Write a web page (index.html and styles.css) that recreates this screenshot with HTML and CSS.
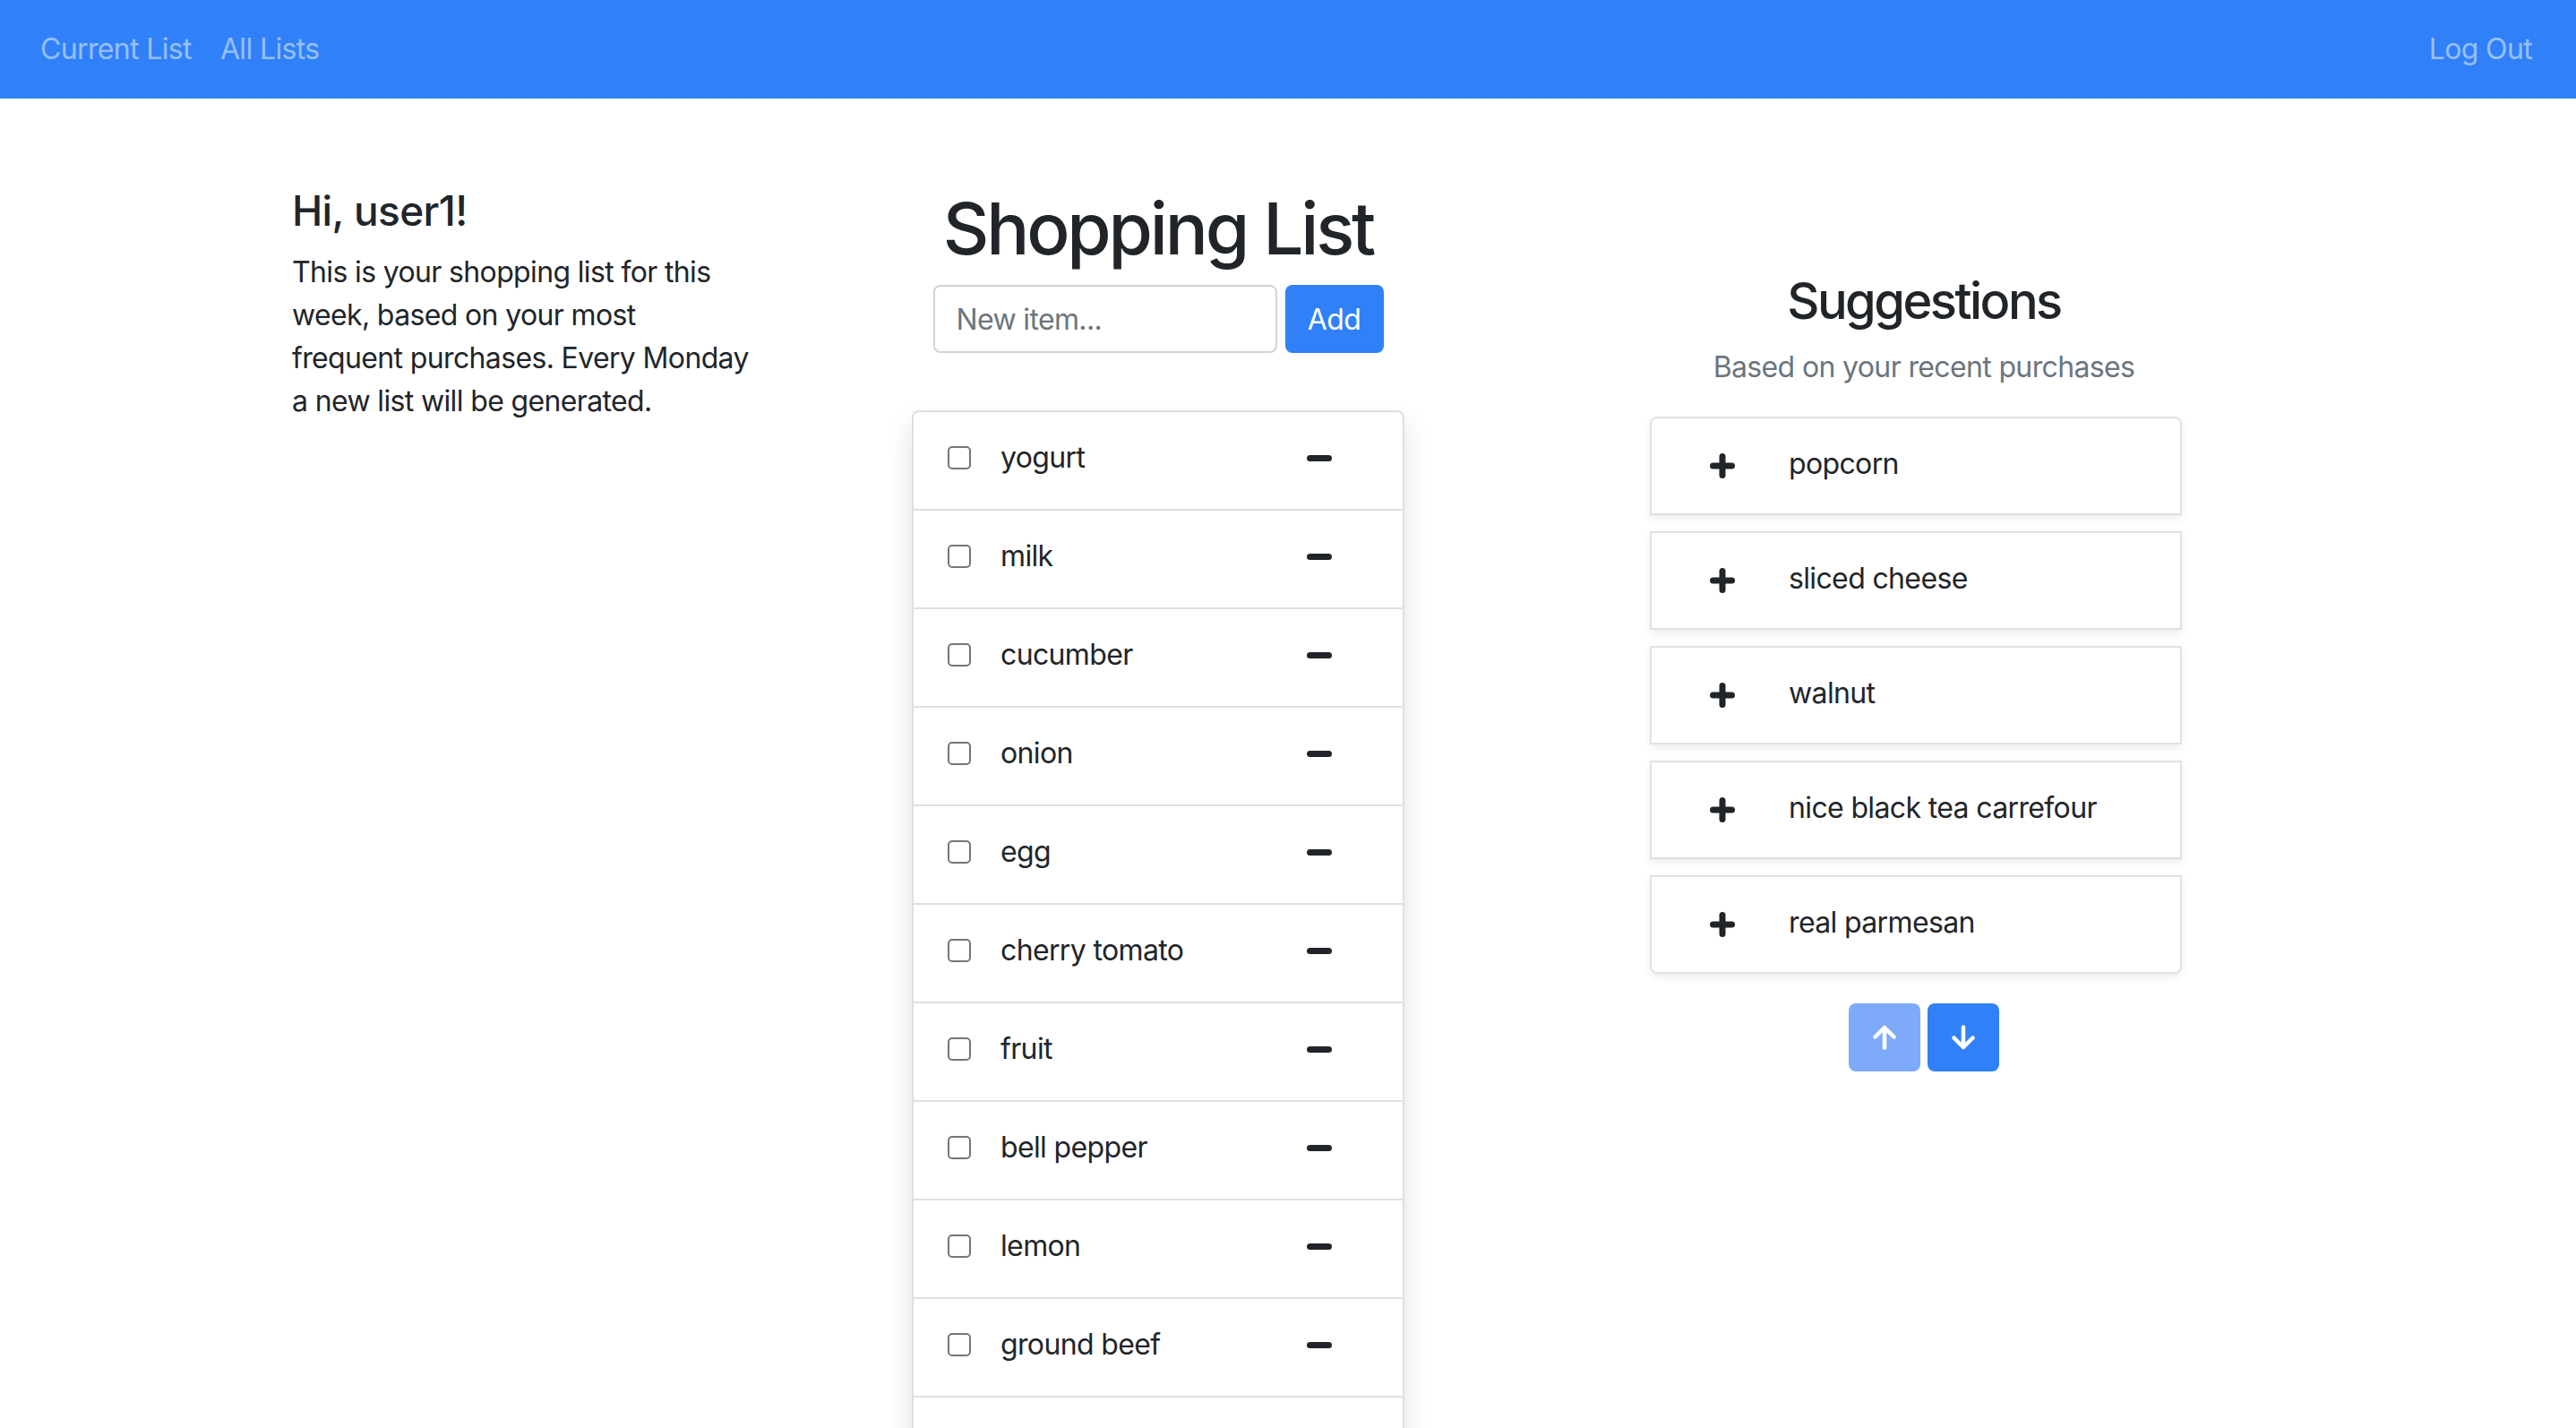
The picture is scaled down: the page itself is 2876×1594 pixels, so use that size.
FILE: index.html
```html
<!DOCTYPE html>
<html lang="en">
<head>
<meta charset="utf-8">
<title>Shopping List</title>
<link rel="stylesheet" href="styles.css">
</head>
<body>
<nav class="navbar">
  <div class="nav-left">
    <a class="nav-link" href="#">Current List</a>
    <a class="nav-link" href="#">All Lists</a>
  </div>
  <a class="nav-link" href="#">Log Out</a>
</nav>
<main class="container">
  <section class="col-intro">
    <h4 class="greeting">Hi, user1!</h4>
    <p class="intro">This is your shopping list for this<br>week, based on your most<br>frequent purchases. Every Monday<br>a new list will be generated.</p>
  </section>
  <section class="col-list">
    <h1 class="title">Shopping List</h1>
    <form class="add-form">
      <input class="add-input" type="text" placeholder="New item...">
      <button class="btn btn-add" type="button">Add</button>
    </form>
    <ul class="list-group">
      <li class="list-item"><input class="check" type="checkbox"><span class="item-name">yogurt</span><svg class="minus" viewBox="0 0 28 7"><path d="M3.5 3.5H24.5"/></svg></li>
      <li class="list-item"><input class="check" type="checkbox"><span class="item-name">milk</span><svg class="minus" viewBox="0 0 28 7"><path d="M3.5 3.5H24.5"/></svg></li>
      <li class="list-item"><input class="check" type="checkbox"><span class="item-name">cucumber</span><svg class="minus" viewBox="0 0 28 7"><path d="M3.5 3.5H24.5"/></svg></li>
      <li class="list-item"><input class="check" type="checkbox"><span class="item-name">onion</span><svg class="minus" viewBox="0 0 28 7"><path d="M3.5 3.5H24.5"/></svg></li>
      <li class="list-item"><input class="check" type="checkbox"><span class="item-name">egg</span><svg class="minus" viewBox="0 0 28 7"><path d="M3.5 3.5H24.5"/></svg></li>
      <li class="list-item"><input class="check" type="checkbox"><span class="item-name">cherry tomato</span><svg class="minus" viewBox="0 0 28 7"><path d="M3.5 3.5H24.5"/></svg></li>
      <li class="list-item"><input class="check" type="checkbox"><span class="item-name">fruit</span><svg class="minus" viewBox="0 0 28 7"><path d="M3.5 3.5H24.5"/></svg></li>
      <li class="list-item"><input class="check" type="checkbox"><span class="item-name">bell pepper</span><svg class="minus" viewBox="0 0 28 7"><path d="M3.5 3.5H24.5"/></svg></li>
      <li class="list-item"><input class="check" type="checkbox"><span class="item-name">lemon</span><svg class="minus" viewBox="0 0 28 7"><path d="M3.5 3.5H24.5"/></svg></li>
      <li class="list-item"><input class="check" type="checkbox"><span class="item-name">ground beef</span><svg class="minus" viewBox="0 0 28 7"><path d="M3.5 3.5H24.5"/></svg></li>
      <li class="list-item"></li>
    </ul>
  </section>
  <section class="col-suggest">
    <h3 class="suggest-title">Suggestions</h3>
    <p class="subtitle">Based on your recent purchases</p>
    <ul class="suggest-list">
      <li class="suggest-item"><svg class="plus" viewBox="0 0 28 28"><path d="M14 3.5V24.5M3.5 14H24.5"/></svg><span class="item-name">popcorn</span></li>
      <li class="suggest-item"><svg class="plus" viewBox="0 0 28 28"><path d="M14 3.5V24.5M3.5 14H24.5"/></svg><span class="item-name">sliced cheese</span></li>
      <li class="suggest-item"><svg class="plus" viewBox="0 0 28 28"><path d="M14 3.5V24.5M3.5 14H24.5"/></svg><span class="item-name">walnut</span></li>
      <li class="suggest-item"><svg class="plus" viewBox="0 0 28 28"><path d="M14 3.5V24.5M3.5 14H24.5"/></svg><span class="item-name">nice black tea carrefour</span></li>
      <li class="suggest-item"><svg class="plus" viewBox="0 0 28 28"><path d="M14 3.5V24.5M3.5 14H24.5"/></svg><span class="item-name">real parmesan</span></li>
    </ul>
    <div class="pager">
      <button class="btn btn-page disabled" type="button"><svg class="arrow" viewBox="0 0 28 28"><path d="M14 25.5V3M3.5 13.5L14 3L24.5 13.5"/></svg></button>
      <button class="btn btn-page" type="button"><svg class="arrow" viewBox="0 0 28 28"><path d="M14 2.5V25M3.5 14.5L14 25L24.5 14.5"/></svg></button>
    </div>
  </section>
</main>
</body>
</html>
```

FILE: styles.css
```css
html, body {
  margin: 0;
  overflow: hidden;
}
body {
  font-family: Inter, "Liberation Sans", sans-serif;
  font-size: 32px;
  line-height: 48px;
  color: #212529;
  background: #ffffff;
  letter-spacing: -0.02em;
}
.navbar {
  height: 110px;
  background: #3080f8;
  display: flex;
  align-items: center;
  justify-content: space-between;
  padding: 0 33px 0 29px;
}
.nav-left {
  display: flex;
}
.nav-link {
  color: rgba(255, 255, 255, 0.5);
  text-decoration: none;
  padding: 0 16px;
  line-height: 48px;
}
.container {
  width: 2280px;
  margin: 0 auto;
  display: flex;
  padding-top: 97px;
}
.col-intro {
  width: 542px;
  padding-left: 28px;
}
.greeting {
  margin: 0 0 17px;
  font-size: 46px;
  line-height: 56px;
  font-weight: 500;
}
.intro {
  margin: 0;
}
.col-list {
  width: 850px;
  display: flex;
  flex-direction: column;
  align-items: center;
}
.title {
  margin: 0;
  font-size: 80px;
  line-height: 96px;
  font-weight: 500;
  letter-spacing: -0.04em;
}
.add-form {
  margin-top: 15px;
  display: flex;
  gap: 9px;
}
.add-input {
  box-sizing: border-box;
  width: 384px;
  height: 76px;
  border: 2px solid #ced4da;
  border-radius: 8px;
  padding: 0 24px;
  font-family: inherit;
  font-size: 32px;
  letter-spacing: -0.02em;
  color: #495057;
  outline: none;
}
.add-input::placeholder {
  color: #6c757d;
}
.btn {
  border: none;
  border-radius: 8px;
  background: #3080f8;
  color: #ffffff;
  font-family: inherit;
  font-size: 32px;
  letter-spacing: -0.02em;
  padding: 0;
  display: flex;
  align-items: center;
  justify-content: center;
}
.btn-add {
  width: 110px;
  height: 76px;
}
.list-group {
  list-style: none;
  margin: 64px 0 0;
  padding: 0;
  box-sizing: border-box;
  width: 550px;
  border: 2px solid #dfdfdf;
  border-radius: 8px;
  box-shadow: 0 16px 32px rgba(0, 0, 0, 0.12);
  background: #ffffff;
}
.list-item {
  height: 110px;
  box-sizing: border-box;
  display: flex;
  align-items: center;
  padding: 0 0 6px 38px;
  border-bottom: 2px solid #dfdfdf;
}
.list-item:last-child {
  border-bottom: none;
}
.check {
  appearance: none;
  -webkit-appearance: none;
  margin: 0;
  width: 26px;
  height: 26px;
  box-sizing: border-box;
  border: 2px solid #767676;
  border-radius: 5px;
  background: #ffffff;
  flex: none;
}
.item-name {
  flex: 1;
  margin-left: 33px;
}
.minus {
  width: 28px;
  height: 7px;
  margin-right: 79px;
  flex: none;
}
.minus path,
.plus path {
  stroke: #212529;
  stroke-width: 7;
  stroke-linecap: round;
  fill: none;
}
.col-suggest {
  width: 860px;
  padding-top: 96px;
  display: flex;
  flex-direction: column;
  align-items: center;
}
.suggest-title {
  margin: 0;
  font-size: 56px;
  line-height: 67px;
  font-weight: 500;
  letter-spacing: -0.045em;
}
.subtitle {
  margin: 16px 0 0;
  color: #6c757d;
}
.suggest-list {
  list-style: none;
  margin: 31px 0 0;
  padding: 0 18px 0 0;
  width: 594px;
}
.suggest-item {
  box-sizing: border-box;
  height: 110px;
  border: 2px solid #dee2e6;
  margin-bottom: 18px;
  display: flex;
  align-items: center;
  padding: 0 0 4px 65px;
  box-shadow: 0 4px 8px rgba(0, 0, 0, 0.075);
  background: #ffffff;
}
.suggest-item:first-child {
  border-radius: 8px 8px 0 0;
}
.suggest-item:last-child {
  border-radius: 0 0 8px 8px;
  margin-bottom: 0;
}
.plus {
  width: 28px;
  height: 28px;
  flex: none;
  margin-top: 4px;
}
.suggest-item .item-name {
  margin-left: 60px;
}
.pager {
  margin-top: 33px;
  display: flex;
  gap: 8px;
}
.btn-page {
  width: 80px;
  height: 76px;
}
.btn-page.disabled {
  background: #7eaafa;
}
.arrow {
  width: 28px;
  height: 28px;
}
.arrow path {
  stroke: #ffffff;
  stroke-width: 4.5;
  stroke-linecap: round;
  stroke-linejoin: round;
  fill: none;
}
```
